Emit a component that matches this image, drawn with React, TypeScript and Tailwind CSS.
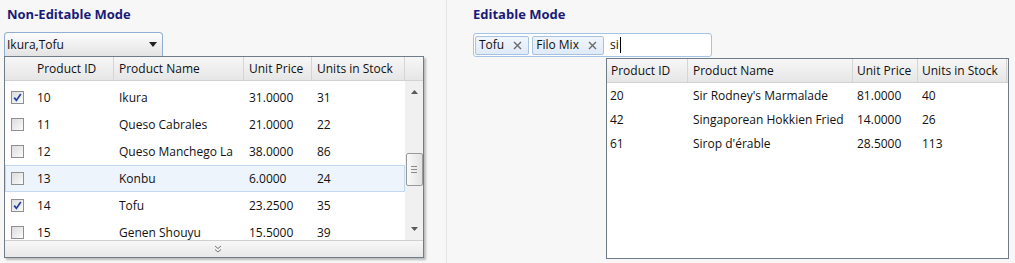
import React from "react";

const LEFT_ROWS = [
  { id: "10", name: "Ikura", price: "31.0000", stock: "31", checked: true },
  { id: "11", name: "Queso Cabrales", price: "21.0000", stock: "22" },
  { id: "12", name: "Queso Manchego La", price: "38.0000", stock: "86" },
  { id: "13", name: "Konbu", price: "6.0000", stock: "24", hover: true },
  { id: "14", name: "Tofu", price: "23.2500", stock: "35", checked: true },
  { id: "15", name: "Genen Shouyu", price: "15.5000", stock: "39" },
];

const RIGHT_ROWS = [
  { id: "20", name: "Sir Rodney's Marmalade", price: "81.0000", stock: "40" },
  { id: "42", name: "Singaporean Hokkien Fried", price: "14.0000", stock: "26" },
  { id: "61", name: "Sirop d'érable", price: "28.5000", stock: "113" },
];

function Checkbox({ checked }: { checked?: boolean }) {
  return (
    <span className="flex h-[13px] w-[13px] items-center justify-center border border-[#8e8f8f] bg-gradient-to-br from-[#dcdcdc] to-[#fbfbfb]">
      {checked && (
        <svg width="9" height="9" viewBox="0 0 9 9">
          <path d="M1.2 4.6 L3.4 7.4 L7.8 1" fill="none" stroke="#21409a" strokeWidth="1.7" />
        </svg>
      )}
    </span>
  );
}

function HeaderCell({ children, className = "" }: { children?: React.ReactNode; className?: string }) {
  return (
    <div className={`flex h-full items-center border-r border-[#d5d5d5] ${className}`}>
      {children}
    </div>
  );
}

function Scrollbar() {
  return (
    <div className="flex w-[18px] flex-col items-center bg-[#f0f0f0]">
      <div className="flex h-[22px] w-full items-center justify-center">
        <svg width="7" height="4" viewBox="0 0 7 4">
          <path d="M0 4 L3.5 0 L7 4 Z" fill="#5a5a5a" />
        </svg>
      </div>
      <div className="mt-[50px] flex h-[33px] w-[17px] flex-col items-center justify-center gap-[2px] rounded-[2px] border border-[#9a9a9a] bg-gradient-to-r from-[#fafafa] to-[#e2e2e2]">
        <span className="h-px w-[6px] bg-[#8a8a8a]" />
        <span className="h-px w-[6px] bg-[#8a8a8a]" />
        <span className="h-px w-[6px] bg-[#8a8a8a]" />
      </div>
      <div className="flex-1" />
      <div className="flex h-[22px] w-full items-center justify-center">
        <svg width="7" height="4" viewBox="0 0 7 4">
          <path d="M0 0 L3.5 4 L7 0 Z" fill="#5a5a5a" />
        </svg>
      </div>
    </div>
  );
}

function NonEditable() {
  return (
    <div className="flex w-[447px] flex-col border-r border-[#e4e4e4] pl-[4px] pt-[5px]">
      <div className="pl-[3px] text-[13px] font-bold leading-[18px] text-[#1a1b78]">Non-Editable Mode</div>
      <div className="mt-[9px] flex h-[24px] w-[159px] items-center justify-between rounded-t-[4px] border border-b-0 border-[#8fb0d2] bg-gradient-to-b from-[#fdfdfd] to-[#e3e3e3] pl-[2px] pr-[5px]">
        <span>Ikura,Tofu</span>
        <svg width="8" height="5" viewBox="0 0 8 5">
          <path d="M0 0 L8 0 L4 5 Z" fill="#222" />
        </svg>
      </div>
      <div className="flex h-[202px] w-[420px] flex-col border border-[#6f7c88] bg-white shadow-[2px_2px_2px_rgba(0,0,0,0.25)]">
        <div className="flex h-[24px] border-b border-[#d2d2d2] bg-gradient-to-b from-[#f7f7f7] to-[#e6e6e6]">
          <HeaderCell className="w-[109px] pl-[32px]">Product ID</HeaderCell>
          <HeaderCell className="w-[130px] pl-[5px]">Product Name</HeaderCell>
          <HeaderCell className="w-[68px] pl-[5px]">Unit Price</HeaderCell>
          <HeaderCell className="w-[93px] pl-[5px]">Units in Stock</HeaderCell>
          <div className="flex-1" />
        </div>
        <div className="flex h-[159px]">
          <div className="flex-1 overflow-hidden pt-[3px]">
            {LEFT_ROWS.map((r) => (
              <div
                key={r.id}
                className={`flex h-[27px] items-center border ${r.hover ? "border-[#c3d9f1] bg-[#edf4fc]" : "border-transparent"}`}
              >
                <div className="flex w-[31px] pl-[5px]">
                  <Checkbox checked={r.checked} />
                </div>
                <div className="w-[77px]">{r.id}</div>
                <div className="w-[130px] overflow-hidden whitespace-nowrap pl-[5px]">{r.name}</div>
                <div className="w-[68px] pl-[5px]">{r.price}</div>
                <div className="pl-[5px]">{r.stock}</div>
              </div>
            ))}
          </div>
          <Scrollbar />
        </div>
        <div className="flex h-[17px] items-center justify-center border-t border-[#cfcfcf] bg-gradient-to-b from-[#f7f7f7] to-[#e8e8e8]">
          <svg width="8" height="8" viewBox="0 0 8 8" className="ml-[8px]">
            <path d="M1 1 L4 3.5 L7 1 M1 4.5 L4 7 L7 4.5" fill="none" stroke="#777" strokeWidth="1" />
          </svg>
        </div>
      </div>
    </div>
  );
}

function Token({ label }: { label: string }) {
  return (
    <div className="flex h-[19px] items-center gap-[9px] rounded-[2px] border border-[#a8c3e2] bg-gradient-to-b from-[#f1f6fc] to-[#dfeaf8] pl-[3px] pr-[6px]">
      <span>{label}</span>
      <svg width="9" height="9" viewBox="0 0 9 9">
        <path d="M1 1 L8 8 M8 1 L1 8" stroke="#6a6a6a" strokeWidth="1.4" />
      </svg>
    </div>
  );
}

function Editable() {
  return (
    <div className="flex flex-1 flex-col pl-[26px] pt-[5px]">
      <div className="text-[13px] font-bold leading-[18px] text-[#1a1b78]">Editable Mode</div>
      <div className="mt-[10px] flex h-[24px] w-[239px] items-center gap-[3px] rounded-[3px] border border-[#a4c4e6] bg-white pl-[1px]">
        <Token label="Tofu" />
        <Token label="Filo Mix" />
        <span className="ml-[3px] flex items-center">
          si<span className="ml-px h-[16px] w-px bg-black" />
        </span>
      </div>
      <div className="ml-[133px] mt-[1px] flex h-[201px] w-[403px] flex-col border border-[#6f7c88] bg-white">
        <div className="flex h-[24px] border-b border-[#d2d2d2] bg-gradient-to-b from-[#f7f7f7] to-[#e6e6e6]">
          <HeaderCell className="w-[81px] pl-[4px]">Product ID</HeaderCell>
          <HeaderCell className="w-[165px] pl-[5px]">Product Name</HeaderCell>
          <HeaderCell className="w-[65px] pl-[4px]">Unit Price</HeaderCell>
          <HeaderCell className="w-[89px] pl-[4px]">Units in Stock</HeaderCell>
        </div>
        <div className="flex flex-col pt-px">
          {RIGHT_ROWS.map((r) => (
            <div key={r.id} className="flex h-[24px] items-center">
              <div className="w-[81px] pl-[3px]">{r.id}</div>
              <div className="w-[165px] whitespace-nowrap pl-[5px]">{r.name}</div>
              <div className="w-[65px] pl-[4px]">{r.price}</div>
              <div className="pl-[4px]">{r.stock}</div>
            </div>
          ))}
        </div>
      </div>
    </div>
  );
}

export default function App() {
  return (
    <div className="flex h-[263px] w-[1015px] overflow-hidden bg-[#f7f7f7] font-['Open_Sans',sans-serif] text-[12px] text-[#111]">
      <NonEditable />
      <Editable />
    </div>
  );
}
